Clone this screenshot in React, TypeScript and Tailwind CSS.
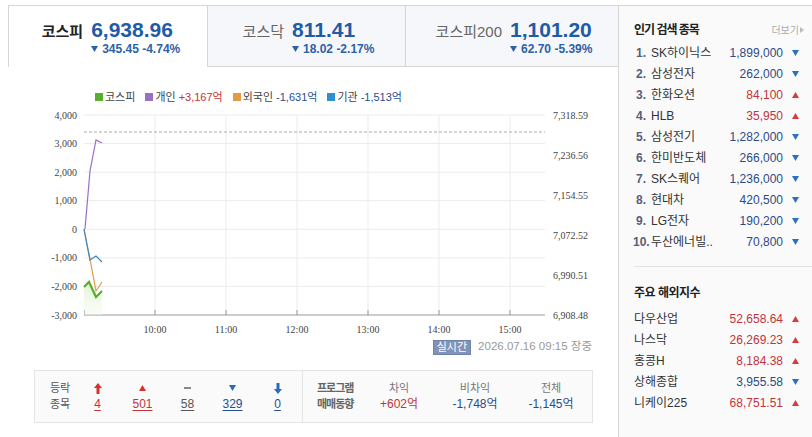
import React from 'react';

type Dir = 'up' | 'down';

const tabs = [
  { name: '코스피', value: '6,938.96', change: '345.45', rate: '-4.74%', active: true },
  { name: '코스닥', value: '811.41', change: '18.02', rate: '-2.17%', active: false },
  { name: '코스피200', value: '1,101.20', change: '62.70', rate: '-5.39%', active: false },
];

const popular: { rank: number; name: string; price: string; dir: Dir }[] = [
  { rank: 1, name: 'SK하이닉스', price: '1,899,000', dir: 'down' },
  { rank: 2, name: '삼성전자', price: '262,000', dir: 'down' },
  { rank: 3, name: '한화오션', price: '84,100', dir: 'up' },
  { rank: 4, name: 'HLB', price: '35,950', dir: 'up' },
  { rank: 5, name: '삼성전기', price: '1,282,000', dir: 'down' },
  { rank: 6, name: '한미반도체', price: '266,000', dir: 'down' },
  { rank: 7, name: 'SK스퀘어', price: '1,236,000', dir: 'down' },
  { rank: 8, name: '현대차', price: '420,500', dir: 'down' },
  { rank: 9, name: 'LG전자', price: '190,200', dir: 'down' },
  { rank: 10, name: '두산에너빌..', price: '70,800', dir: 'down' },
];

const overseas: { name: string; price: string; dir: Dir }[] = [
  { name: '다우산업', price: '52,658.64', dir: 'up' },
  { name: '나스닥', price: '26,269.23', dir: 'up' },
  { name: '홍콩H', price: '8,184.38', dir: 'up' },
  { name: '상해종합', price: '3,955.58', dir: 'down' },
  { name: '니케이225', price: '68,751.51', dir: 'up' },
];

const legend = [
  { label: '코스피', color: 'bg-[#5aae2e]', value: '', tone: '' },
  { label: '개인', color: 'bg-[#9b6fc2]', value: '+3,167억', tone: 'text-[#c0343a]' },
  { label: '외국인', color: 'bg-[#e39a45]', value: '-1,631억', tone: 'text-[#1f4f8f]' },
  { label: '기관', color: 'bg-[#2f8fd2]', value: '-1,513억', tone: 'text-[#1f4f8f]' },
];

const leftTicks = ['4,000', '3,000', '2,000', '1,000', '0', '-1,000', '-2,000', '-3,000'];
const rightTicks = ['7,318.59', '7,236.56', '7,154.55', '7,072.52', '6,990.51', '6,908.48'];
const timeTicks = ['10:00', '11:00', '12:00', '13:00', '14:00', '15:00'];

const Tri = ({ dir, className }: { dir: Dir; className: string }) => (
  <svg width="7" height="6" viewBox="0 0 7 6" className={className}>
    {dir === 'up' ? <path d="M3.5 0 L7 6 H0 Z" fill="currentColor" /> : <path d="M0 0 H7 L3.5 6 Z" fill="currentColor" />}
  </svg>
);

const ThickArrow = ({ dir, className }: { dir: Dir; className: string }) => (
  <svg width="8" height="11" viewBox="0 0 8 11" className={className}>
    {dir === 'up' ? (
      <path d="M4 0 L8 5 H5.5 V11 H2.5 V5 H0 Z" fill="currentColor" />
    ) : (
      <path d="M2.5 0 H5.5 V6 H8 L4 11 L0 6 H2.5 Z" fill="currentColor" />
    )}
  </svg>
);

const Chart = () => {
  const gy = (i: number) => 115 + (i * 200) / 7;
  const gx = (i: number) => 84 + (i + 1) * 71;
  return (
    <svg width="570" height="233" viewBox="30 105 570 233" className="block ml-[30px]">
      <defs>
        <linearGradient id="kospiFill" x1="0" y1="0" x2="0" y2="1">
          <stop offset="0" stopColor="#d8f1c8" stopOpacity="0.8" />
          <stop offset="1" stopColor="#f1faea" stopOpacity="0.4" />
        </linearGradient>
      </defs>
      {leftTicks.map((t, i) => (
        <g key={t}>
          {i < 7 && <line x1="84" x2="545" y1={gy(i)} y2={gy(i)} stroke="#ebebeb" strokeWidth="1" />}
          <text x="77" y={gy(i) + 3.5} textAnchor="end" fontSize="10" fontFamily="Liberation Serif, serif" fill="#444">
            {t}
          </text>
        </g>
      ))}
      {timeTicks.map((t, i) => (
        <g key={t}>
          <line x1={gx(i)} x2={gx(i)} y1="115" y2="315" stroke="#ebebeb" strokeWidth="1" />
          <line x1={gx(i)} x2={gx(i)} y1="310" y2="315" stroke="#999" strokeWidth="1" />
          <text x={gx(i)} y="332.5" textAnchor="middle" fontSize="10" fontFamily="Liberation Serif, serif" fill="#444">
            {t}
          </text>
        </g>
      ))}
      {rightTicks.map((t, i) => (
        <text key={t} x="553" y={115 + i * 40 + 3.5} fontSize="10" fontFamily="Liberation Serif, serif" fill="#444">
          {t}
        </text>
      ))}
      <line x1="84" x2="545" y1="132" y2="132" stroke="#aaa" strokeWidth="1" strokeDasharray="3 2" />
      <line x1="84" x2="545" y1="315" y2="315" stroke="#999" strokeWidth="1" />
      <line x1="84.5" x2="84.5" y1="310" y2="315" stroke="#999" strokeWidth="1" />

      {/* intraday flows */}
      <polygon points="84,287 89,282 96,297 102,291 102,315 84,315" fill="url(#kospiFill)" />
      <polyline points="84,229 90,259 96,291 102,282" fill="none" stroke="#e39a45" strokeWidth="1.2" />
      <polyline points="84,229 86,240 90,260 96,256 102,262" fill="none" stroke="#3b88c4" strokeWidth="1.2" />
      <polyline points="85,229 90,171 96,140 102,143" fill="none" stroke="#9b6fc2" strokeWidth="1.2" />
      <polyline points="84,287 89,282 96,297 102,291" fill="none" stroke="#5aae2e" strokeWidth="2.2" strokeLinejoin="miter" />
    </svg>
  );
};

const breadth = [
  { icon: <ThickArrow dir="up" className="text-[#d8312b]" />, value: '4', tone: 'text-[#c0343a]' },
  { icon: <Tri dir="up" className="text-[#d8312b]" />, value: '501', tone: 'text-[#c0343a]' },
  { icon: <span className="block w-[7px] h-[2px] bg-[#888]" />, value: '58', tone: 'text-[#555]' },
  { icon: <Tri dir="down" className="text-[#2a6bbd]" />, value: '329', tone: 'text-[#1f4f8f]' },
  { icon: <ThickArrow dir="down" className="text-[#2a6bbd]" />, value: '0', tone: 'text-[#1f4f8f]' },
];

const program = [
  { label: '차익', value: '+602억', tone: 'text-[#c0343a]' },
  { label: '비차익', value: '-1,748억', tone: 'text-[#1f4f8f]' },
  { label: '전체', value: '-1,145억', tone: 'text-[#1f4f8f]' },
];

export default function App() {
  return (
    <div className="flex w-[812px] h-[437px] bg-white overflow-hidden font-['Liberation_Sans','Noto_Sans_CJK_KR',sans-serif]">
      {/* index tabs + chart */}
      <div className="flex flex-col w-[618px] pt-[5px]">
        <div className="flex ml-[8px] h-[62px]">
          {tabs.map((t, i) => (
            <div
              key={t.name}
              className={
                t.active
                  ? 'w-[199px] h-[62px] border-t border-l border-[#d6d6d6] bg-white flex justify-center pl-[6px] pt-[12px]'
                  : i === 1
                    ? 'w-[198px] h-[62px] border-t border-l border-b border-[#d6d6d6] bg-[#f6f7fa] flex justify-center pl-[4px] pt-[12px]'
                    : 'w-[213px] h-[62px] border-t border-l border-b border-[#d6d6d6] bg-[#f6f7fa] flex justify-center pl-[4px] pt-[12px]'
              }
            >
              <div className="flex items-baseline gap-[8px]">
                <span className={t.active ? 'text-[15px] font-bold text-[#222]' : 'text-[15px] text-[#666]'}>{t.name}</span>
                <div className="flex flex-col">
                  <span className="text-[21px] leading-[24px] font-bold text-[#1f5ba6]">{t.value}</span>
                  <span className="flex items-center text-[12px] leading-[14px] font-bold text-[#2c62a6]">
                    <Tri dir="down" className="mr-[4px]" />
                    {t.change} {t.rate}
                  </span>
                </div>
              </div>
            </div>
          ))}
        </div>

        <div className="flex items-center gap-[10px] mt-[22px] h-[16px] pl-[95px] text-[11px] text-[#444]">
          {legend.map((l) => (
            <div key={l.label} className="flex items-center">
              <span className={`w-[8px] h-[8px] mr-[2px] ${l.color}`} />
              <span>{l.label}</span>
              {l.value && <span className={`ml-[3px] ${l.tone}`}>{l.value}</span>}
            </div>
          ))}
        </div>

        <Chart />

        <div className="flex justify-end items-center gap-[7px] mt-[2px] h-[14px] pr-[26px]">
          <span className="h-[15px] leading-[13px] px-[3px] text-[11px] text-white bg-[#8193b9] border border-[#6f82aa]">실시간</span>
          <span className="text-[11.5px] text-[#999]">2026.07.16 09:15 장중</span>
        </div>

        <div className="flex mt-[16px] ml-[34px] w-[559px] h-[53px] border border-[#e4e4e4] bg-[#fafafa]">
          <div className="flex w-[268px] pl-[15px] pt-[9px] border-r border-[#e4e4e4]">
            <div className="w-[25px] text-[11px] leading-[16px] text-[#555]">
              <div>등락</div>
              <div>종목</div>
            </div>
            {breadth.map((b, i) => (
              <div key={i} className="w-[45px] flex flex-col items-center">
                <div className="h-[16px] flex items-center justify-center">{b.icon}</div>
                <span className={`text-[12px] leading-[16px] underline underline-offset-2 ${b.tone}`}>{b.value}</span>
              </div>
            ))}
          </div>
          <div className="flex pl-[14px] pt-[9px]">
            <div className="w-[44px] text-[11px] leading-[16px] font-bold tracking-[-1px] text-[#666]">
              <div>프로그램</div>
              <div>매매동향</div>
            </div>
            {program.map((p) => (
              <div key={p.label} className="w-[76px] flex flex-col items-center">
                <span className="text-[11px] leading-[16px] text-[#777]">{p.label}</span>
                <span className={`text-[12px] leading-[16px] ${p.tone}`}>{p.value}</span>
              </div>
            ))}
          </div>
        </div>
      </div>

      {/* side panel */}
      <div className="w-[194px] mt-[5px] border-t border-l border-[#d6d6d6] bg-[#fafafa] pl-[15px] pr-[11px]">
        <div className="flex items-center justify-between h-[16px] mt-[16px]">
          <span className="text-[12px] font-bold tracking-[-1px] text-[#222]">인기 검색 종목</span>
          <span className="flex items-center text-[10px] text-[#aaa] -mr-[3px]">
            더보기
            <svg width="4" height="6" viewBox="0 0 4 6" className="ml-[1px]">
              <path d="M0 0 L4 3 L0 6 Z" fill="#bbb" />
            </svg>
          </span>
        </div>
        <div className="mt-[4px]">
          {popular.map((p) => (
            <div key={p.rank} className="flex items-center h-[21px] text-[12px]">
              <span className={p.rank === 10 ? 'w-[18px] -ml-[1px] font-bold text-[#56607c]' : 'w-[15px] ml-[2px] font-bold text-[#56607c]'}>
                {p.rank}.
              </span>
              <span className="flex-1 text-[#333] truncate">{p.name}</span>
              <span className={p.dir === 'up' ? 'mr-[6px] text-[#c0343a]' : 'mr-[6px] text-[#2c4a86]'}>{p.price}</span>
              <span className="w-[12px] flex justify-center">
                <Tri dir={p.dir} className={p.dir === 'up' ? 'text-[#d23c3c]' : 'text-[#2f6fc0]'} />
              </span>
            </div>
          ))}
        </div>
        <div className="mt-[14px] border-t border-[#e2e2e2] -mr-[11px]" />
        <div className="h-[16px] mt-[18px] flex items-center text-[12px] font-bold tracking-[-0.5px] text-[#222]">주요 해외지수</div>
        <div className="mt-[7px]">
          {overseas.map((o) => (
            <div key={o.name} className="flex items-center h-[21px] text-[12px]">
              <span className="flex-1 text-[#333]">{o.name}</span>
              <span className={o.dir === 'up' ? 'mr-[6px] text-[#c0343a]' : 'mr-[6px] text-[#2c4a86]'}>{o.price}</span>
              <span className="w-[12px] flex justify-center">
                <Tri dir={o.dir} className={o.dir === 'up' ? 'text-[#d23c3c]' : 'text-[#2f6fc0]'} />
              </span>
            </div>
          ))}
        </div>
      </div>
    </div>
  );
}
